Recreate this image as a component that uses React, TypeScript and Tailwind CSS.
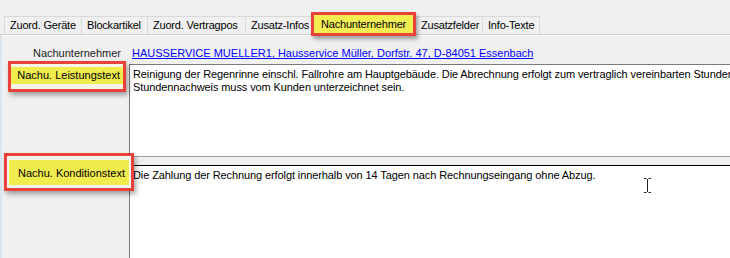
import React from "react";

const tabs: { label: string; w: number }[] = [
  { label: "Zuord. Geräte", w: 77 },
  { label: "Blockartikel", w: 66 },
  { label: "Zuord. Vertragpos", w: 98 },
  { label: "Zusatz-Infos", w: 66 },
  { label: "", w: 104 },
  { label: "Zusatzfelder", w: 67 },
  { label: "Info-Texte", w: 58 },
];

export default function App() {
  return (
    <div className="relative w-[730px] h-[258px] overflow-hidden bg-[#f0f0f0] font-['Liberation_Sans',Arial,sans-serif] text-[11px] leading-[13px] text-black flex flex-col">
      <div className="h-[16px] shrink-0" />
      {/* Tab strip */}
      <div className="flex h-[19px] shrink-0 border-b border-[#cfcfcf] pl-[4px]">
        {tabs.map((t, i) => (
          <div
            key={i}
            style={{ width: t.w }}
            className={
              "h-[18px] border-t border-l border-[#d9d9d9] flex items-center pl-[5px] whitespace-nowrap tracking-[-0.2px] " +
              (i === tabs.length - 1 ? "border-r" : "")
            }
          >
            {t.label}
          </div>
        ))}
      </div>
      {/* Content */}
      <div className="flex flex-1 min-h-0">
        <div className="w-[2px] bg-[#dce4ee] shrink-0" />
        <div className="flex-1 grid grid-cols-[127px_1fr] grid-rows-[28px_93px_8px_1fr] border-t border-white">
          <div className="text-right pr-[8px] pt-[11px] text-[#1a1a1a]">Nachunternehmer</div>
          <div className="pt-[11px] pl-[3px] whitespace-nowrap overflow-hidden">
            <span className="text-[#0000ff] underline">
              HAUSSERVICE MUELLER1, Hausservice Müller, Dorfstr. 47, D-84051 Essenbach
            </span>
          </div>

          <div />
          <div className="bg-white border-l border-t border-[#7a7a7a] border-b-[#a0a0a0] border-b pl-[3px] pt-[3px] whitespace-nowrap overflow-hidden tracking-[-0.1px]">
            <div>
              Reinigung der Regenrinne einschl. Fallrohre am Hauptgebäude. Die Abrechnung erfolgt zum vertraglich vereinbarten Stundenlohn.
            </div>
            <div>Stundennachweis muss vom Kunden unterzeichnet sein.</div>
          </div>

          <div />
          <div className="border-l border-[#7a7a7a]" />

          <div />
          <div className="bg-white border-l border-[#7a7a7a] border-t border-t-black pl-[3px] pt-[3px] whitespace-nowrap overflow-hidden tracking-[-0.1px]">
            Die Zahlung der Rechnung erfolgt innerhalb von 14 Tagen nach Rechnungseingang ohne Abzug.
          </div>
        </div>
      </div>

      {/* Annotation highlights */}
      <div className="absolute left-[311px] top-[12px] w-[105px] h-[24px] border-[3px] border-[#e8423a] bg-[#f2ee52] shadow-[2px_3px_4px_rgba(0,0,0,0.35)] flex items-center pl-[7px]">
        <span className="leading-[13px] tracking-[-0.2px]">Nachunternehmer</span>
      </div>

      <div className="absolute left-[8px] top-[61px] w-[118px] h-[31px] border-[3px] border-[#e8423a] bg-[#f4f4e8] shadow-[2px_3px_5px_rgba(0,0,0,0.35)]">
        <div className="h-[17px] mt-[3px] bg-[#f1ec4e] text-right pr-[3px] pt-[2px]">Nachu. Leistungstext</div>
      </div>

      <div className="absolute left-[4px] top-[153px] w-[130px] h-[38px] border-[3px] border-[#e8423a] bg-[#f4f4ec] shadow-[2px_3px_5px_rgba(0,0,0,0.35)]">
        <div className="h-[25px] mt-[4px] mx-[2px] bg-[#f1ec4e] text-right pr-[4px] pt-[7px] leading-[13px]">
          Nachu. Konditionstext
        </div>
      </div>

      {/* I-beam cursor */}
      <svg className="absolute left-[643px] top-[177px]" width="9" height="17" viewBox="0 0 9 17">
        <path d="M1 1.5h2.5M5.5 1.5H8M4.5 2v13M1 15.5h2.5M5.5 15.5H8" stroke="#222" strokeWidth="1" fill="none" />
      </svg>
    </div>
  );
}
